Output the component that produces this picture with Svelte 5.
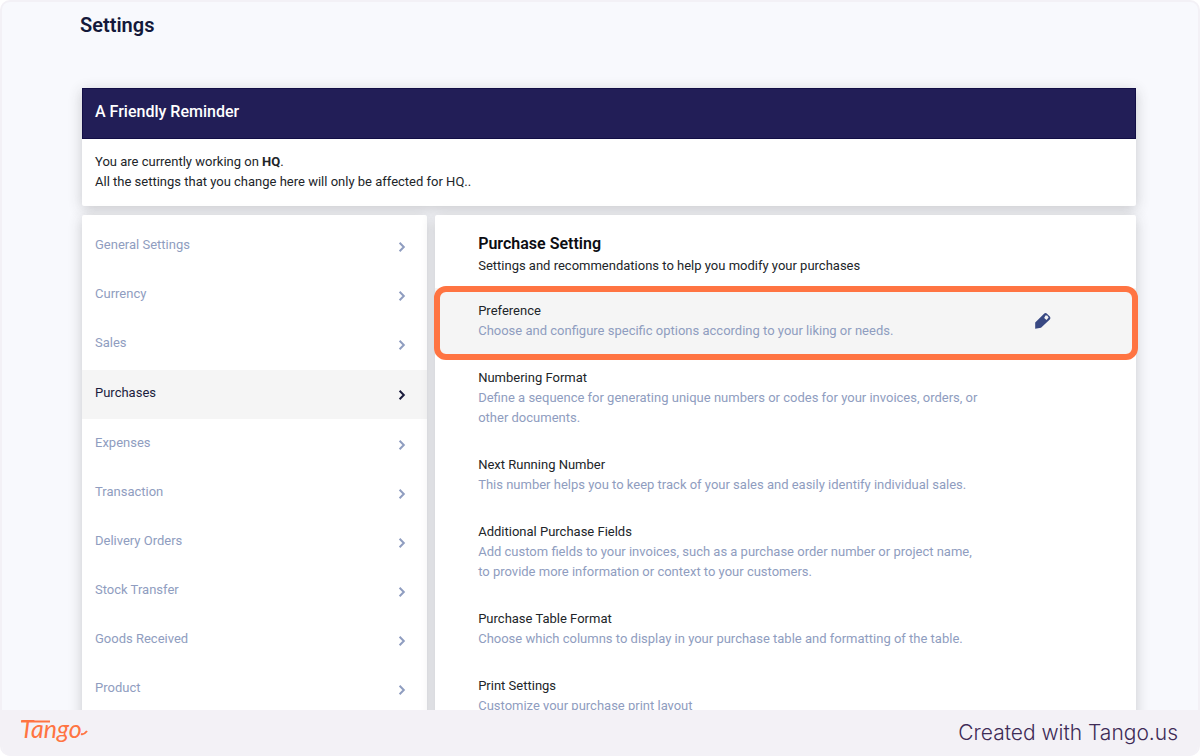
<script lang="ts">
    interface ISetting {
        title: string;
        text: string;
        selected?: boolean;
    }

    const sections: string[] = [
        'General Settings',
        'Currency',
        'Sales',
        'Purchases',
        'Expenses',
        'Transaction',
        'Delivery Orders',
        'Stock Transfer',
        'Goods Received',
        'Product',
    ];

    const settings: ISetting[] = [
        {
            title: 'Preference',
            text: 'Choose and configure specific options according to your liking or needs.',
            selected: true,
        },
        {
            title: 'Numbering Format',
            text: 'Define a sequence for generating unique numbers or codes for your invoices, orders, or other documents.',
        },
        {
            title: 'Next Running Number',
            text: 'This number helps you to keep track of your sales and easily identify individual sales.',
        },
        {
            title: 'Additional Purchase Fields',
            text: 'Add custom fields to your invoices, such as a purchase order number or project name, to provide more information or context to your customers.',
        },
        {
            title: 'Purchase Table Format',
            text: 'Choose which columns to display in your purchase table and formatting of the table.',
        },
        {
            title: 'Print Settings',
            text: 'Customize your purchase print layout',
        },
    ];

    let active = $state('Purchases');
</script>

<div class="frame">
    <main>
        <h1>Settings</h1>

        <section class="card reminder">
            <h2>A Friendly Reminder</h2>
            <p>
                You are currently working on <strong>HQ</strong>.<br />
                All the settings that you change here will only be affected for HQ..
            </p>
        </section>

        <div class="columns">
            <nav class="card" aria-label="Settings">
                {#each sections as section}
                    <a
                        href="#settings"
                        class:active={section === active}
                        onclick={() => (active = section)}
                    >
                        {section}
                        <svg width="8" height="12" viewBox="0 0 8 12" aria-hidden="true">
                            <path d="M1.6 1.8 5.8 6 1.6 10.2" />
                        </svg>
                    </a>
                {/each}
            </nav>

            <section class="card panel">
                <header>
                    <h2>Purchase Setting</h2>
                    <p>Settings and recommendations to help you modify your purchases</p>
                </header>

                {#each settings as { title, text, selected }}
                    <div class="row" class:selected>
                        <div class="info">
                            <h3>{title}</h3>
                            <p>{text}</p>
                        </div>
                        {#if selected}
                            <button type="button" aria-label="Edit {title}">
                                <svg width="18" height="18" viewBox="0 0 18 18" aria-hidden="true">
                                    <path
                                        fill-rule="evenodd"
                                        d="M1.2 10.4 9.8 1.9Q11.6.3 13.2 1.9L15.8 4.5Q17.2 6 15.8 7.6L7 15.8 1.2 16.8ZM11.4 3.4 10.2 6 12.5 7.9 14.6 5.6 13.2 3.6Z"
                                    />
                                </svg>
                            </button>
                        {/if}
                    </div>
                {/each}
            </section>
        </div>
    </main>

    <footer>
        <svg class="logo" width="76" height="44" viewBox="0 0 76 44" role="img" aria-label="Tango">
            <text x="4" y="27">Tango</text>
            <path d="M5 10.5H34M65 23Q68 24 71 20" />
        </svg>
        <span>Created with Tango.us</span>
    </footer>
</div>

<style>
    :global(body) {
        margin: 0;
        background: #fff;
    }

    .frame {
        display: flex;
        flex-direction: column;
        box-sizing: border-box;
        height: 100vh;
        overflow: hidden;
        border: 2px solid #f3f1f6;
        border-bottom: 0;
        border-radius: 10px;
        background: #f8f9fd;
        color: #212529;
        font: 13px/20px Roboto, sans-serif;
    }

    main {
        flex: 1;
        min-height: 0;
        overflow: hidden;
        padding: 10px 62px 0 80px;
    }

    h1,
    h2,
    h3,
    p {
        margin: 0;
    }

    h1 {
        margin: 0 -2px 50px;
        color: #14193a;
        font-size: 20px;
        font-weight: 600;
        line-height: 26px;
    }

    .card {
        border-radius: 2px;
        background: #fff;
        box-shadow: 0 3px 14px rgba(50, 50, 50, 0.24);
    }

    .reminder {
        margin-bottom: 9px;

        & h2 {
            padding: 12px 13px 15px;
            background: #221e57;
            box-shadow: inset 0 0 0 1px #120e45;
            color: #fff;
            font-size: 16px;
            font-weight: 500;
            line-height: 24px;
        }

        & p {
            padding: 13px 13px 14px;
        }
    }

    .columns {
        display: grid;
        grid-template-columns: 33fr 67fr;
        gap: 8px;
    }

    nav {
        padding-top: 7px;

        & a {
            display: flex;
            align-items: center;
            justify-content: space-between;
            box-sizing: border-box;
            height: 49px;
            padding: 0 21px 4px 13px;
            color: #8f9dc0;
            text-decoration: none;
        }

        & svg {
            margin-top: 4px;
            fill: none;
            stroke: currentColor;
            stroke-width: 2;
        }

        & .active {
            margin: 1px 0;
            background: #f5f5f5;
            color: #1b1c3d;
        }
    }

    .panel {
        & header {
            padding: 17px 43px 12px;
            color: #212529;
        }

        & header h2 {
            color: #0c0d12;
            font-size: 16px;
            font-weight: 600;
            line-height: 24px;
        }
    }

    .row {
        position: relative;
        display: flex;
        align-items: center;
        justify-content: space-between;
        padding: 13px 84px 14px 43px;

        & h3 {
            font-size: 13px;
            font-weight: 400;
            line-height: 20px;
        }

        & p {
            color: #8f9dc0;
        }

        &.selected {
            background: #f5f5f5;
        }

        &.selected::after {
            content: '';
            position: absolute;
            inset: -2px -2px -5px -1px;
            border: 6px solid #ff7442;
            border-radius: 12px;
            pointer-events: none;
        }
    }

    .info {
        max-width: 504px;
    }

    button {
        display: flex;
        padding: 0;
        border: 0;
        background: none;
        cursor: pointer;

        & svg {
            fill: #394983;
        }
    }

    footer {
        display: flex;
        align-items: center;
        justify-content: space-between;
        height: 46px;
        padding: 0 20px 0 14px;
        background: #f3f1f6;
        color: #3e2b56;
        font: 300 21px/26px Inter, sans-serif;
    }

    .logo {
        & text {
            fill: #ff7442;
            font: italic 400 25px Lato, sans-serif;
        }

        & path {
            fill: none;
            stroke: #ff7442;
            stroke-width: 2;
        }
    }
</style>
